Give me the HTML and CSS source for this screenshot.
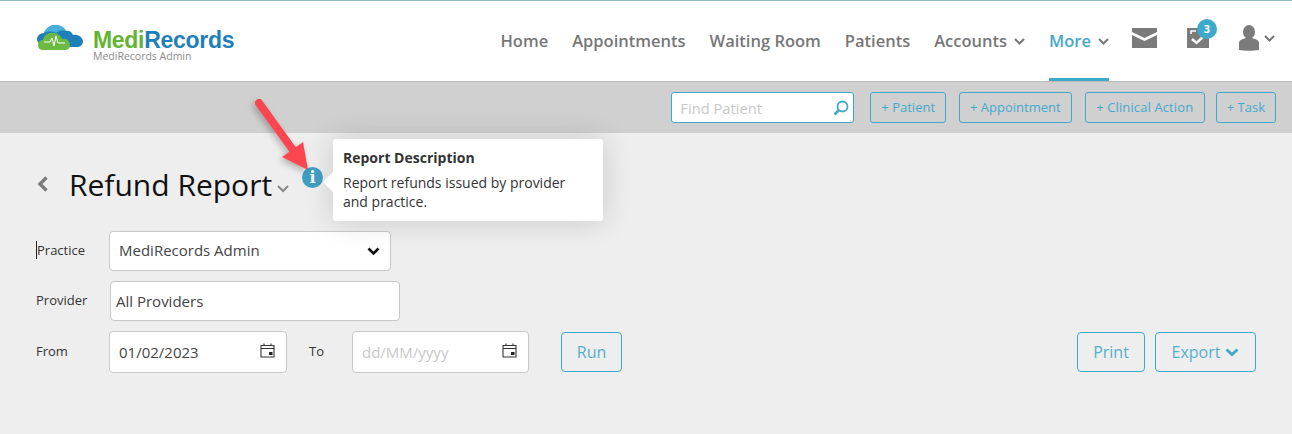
FILE: index.html
```html
<!DOCTYPE html>
<html>
<head>
    <meta charset="UTF-8">
    <title>Refund Report</title>
    <link rel="stylesheet" href="styles.css">
</head>
<body>
    <header class="topbar">
        <div class="brand">
            <svg class="brand-logo" width="48" height="27" viewBox="0 0 48 27">
                <path fill="#1f7fb8" d="M5 20C1 19 0 15 2 12C3 10 6 9 8 9C10 4 14 1 19 1C24 1 28 3 30 7C33 6 36 8 37 11C41 10 46 12 47 17C47 21 44 23 41 23L8 23Z"/>
                <path fill="#48b0d8" d="M8 9C10 4 14 1 19 1C24 1 28 3 30 7C25 6 22 7 20 9C16 7 11 7 8 9Z"/>
                <path fill="#6cb944" d="M7 26C4 26 2 24 2 21C2 18 4 16 7 16C8 11 13 8 18 9C22 9 25 12 26 15C30 14 34 17 34 21C34 24 32 26 29 26Z"/>
                <path fill="none" stroke="#fff" stroke-width="1" d="M8 18H14L16 14L18 22L20 12L22 19H29"/>
            </svg>
            <div class="brand-text">
                <div class="brand-name"><span class="brand-medi">Medi</span><span class="brand-records">Records</span></div>
                <div class="brand-practice">MediRecords Admin</div>
            </div>
        </div>
        <nav class="main-nav">
            <a class="nav-item">Home</a>
            <a class="nav-item">Appointments</a>
            <a class="nav-item">Waiting Room</a>
            <a class="nav-item">Patients</a>
            <a class="nav-item">Accounts
                <svg class="nav-caret" width="11" height="7" viewBox="0 0 11 7"><path d="M1 1L5.5 5.5L10 1" fill="none" stroke="currentColor" stroke-width="2"/></svg>
            </a>
            <a class="nav-item nav-active">More
                <svg class="nav-caret" width="11" height="7" viewBox="0 0 11 7"><path d="M1 1L5.5 5.5L10 1" fill="none" stroke="#777" stroke-width="2"/></svg>
            </a>
        </nav>
        <div class="nav-icons">
            <svg class="icon-mail" width="25" height="20" viewBox="0 0 25 20">
                <path fill="#7b7b7b" d="M0 0H25V4L12.5 10L0 4Z"/>
                <path fill="#7b7b7b" d="M0 7L12.5 13L25 7V20H0Z"/>
            </svg>
            <div class="tasks">
                <svg width="22" height="20" viewBox="0 0 22 20">
                    <path fill="#7b7b7b" d="M0 0H22V20H0Z"/>
                    <path fill="none" stroke="#fff" stroke-width="1.5" d="M4 6V3H9"/>
                    <path fill="none" stroke="#fff" stroke-width="2.4" d="M5 11L9.5 15L17 8"/>
                </svg>
                <span class="badge">3</span>
            </div>
            <div class="user-menu">
                <svg width="20" height="26" viewBox="0 0 20 26">
                    <ellipse cx="10" cy="7" rx="6" ry="7" fill="#7b7b7b"/>
                    <path fill="#7b7b7b" d="M0 25V18C0 15 4 14 7 13H13C16 14 20 15 20 18V25C14 26 6 26 0 25Z"/>
                </svg>
                <svg width="11" height="7" viewBox="0 0 11 7"><path d="M1 1L5.5 5.5L10 1" fill="none" stroke="#777" stroke-width="2"/></svg>
            </div>
        </div>
    </header>

    <div class="toolbar">
        <div class="find-patient">
            <span class="find-text">Find Patient</span>
            <svg width="16" height="16" viewBox="0 0 16 16">
                <circle cx="9.5" cy="6.5" r="5" fill="none" stroke="#3fa9c9" stroke-width="1.8"/>
                <path d="M6 10L1.5 14.5" stroke="#3fa9c9" stroke-width="2.6"/>
            </svg>
        </div>
        <a class="tool-btn tool-first">+ Patient</a>
        <a class="tool-btn">+ Appointment</a>
        <a class="tool-btn tool-clinical">+ Clinical Action</a>
        <a class="tool-btn tool-last">+ Task</a>
    </div>

    <main class="report">
        <div class="title-row">
            <svg class="back" width="12" height="16" viewBox="0 0 12 16"><path d="M9.5 1.5L3 8L9.5 14.5" fill="none" stroke="#7b7b7b" stroke-width="3.4"/></svg>
            <h1>Refund Report</h1>
            <svg class="title-caret" width="12" height="8" viewBox="0 0 12 8"><path d="M1 1L6 6L11 1" fill="none" stroke="#888" stroke-width="2"/></svg>
            <span class="info-icon">i</span>
        </div>

        <form class="report-form">
            <div class="form-row">
                <label class="practice-label">Practice</label>
                <div class="control select-box">
                    <span class="select-value">MediRecords Admin</span>
                    <svg width="13" height="9" viewBox="0 0 13 9"><path d="M1.5 1.5L6.5 6.5L11.5 1.5" fill="none" stroke="#111" stroke-width="2.6"/></svg>
                </div>
            </div>
            <div class="form-row">
                <label>Provider</label>
                <div class="control provider-box">All Providers</div>
            </div>
            <div class="form-row date-row">
                <label>From</label>
                <div class="control date-box">
                    <span>01/02/2023</span>
                    <svg class="cal" width="15" height="15" viewBox="0 0 15 15"><path d="M1 2.5H14V14H1ZM1 5.5H14M4 .5V3M11 .5V3" fill="none" stroke="#333" stroke-width="1.1"/><rect x="9" y="9" width="3.5" height="3" fill="#222"/></svg>
                </div>
                <label class="to-label">To</label>
                <div class="control date-box date-empty">
                    <span>dd/MM/yyyy</span>
                    <svg class="cal" width="15" height="15" viewBox="0 0 15 15"><path d="M1 2.5H14V14H1ZM1 5.5H14M4 .5V3M11 .5V3" fill="none" stroke="#333" stroke-width="1.1"/><rect x="9" y="9" width="3.5" height="3" fill="#222"/></svg>
                </div>
                <a class="btn run-btn">Run</a>
                <a class="btn print-btn">Print</a>
                <a class="btn export-btn">Export
                    <svg width="14" height="9" viewBox="0 0 14 9"><path d="M1.5 1.5L7 6.5L12.5 1.5" fill="none" stroke="#3fa9c9" stroke-width="2.8"/></svg>
                </a>
            </div>
        </form>
    </main>

    <div class="tooltip">
        <h4>Report Description</h4>
        <p>Report refunds issued by provider and practice.</p>
    </div>

    <svg class="callout-arrow" width="70" height="85" viewBox="0 0 70 85">
        <path d="M9 8L43 55" stroke="#fb4650" stroke-width="8" stroke-linecap="round"/>
        <path d="M32 62L53 47L58 75Z" fill="#fb4650"/>
    </svg>
</body>
</html>
```

FILE: styles.css
```css
html, body {
    margin: 0;
    padding: 0;
    height: 434px;
    overflow: hidden;
    background: #eeeeee;
    font-family: 'Open Sans', sans-serif;
    color: #333;
}

.topbar {
    display: flex;
    align-items: stretch;
    height: 80px;
    background: #fff;
    border-top: 1px solid #8fb9bf;
    border-bottom: 1px solid #bbb;
    padding-left: 36px;
}

.brand {
    display: flex;
    align-items: flex-start;
    padding-top: 23px;
}

.brand-logo {
    margin-right: 9px;
}

.brand-text {
    padding-top: 6px;
}

.brand-name {
    font-family: 'Liberation Sans', sans-serif;
    font-weight: bold;
    font-size: 23px;
    line-height: 21px;
    letter-spacing: -0.3px;
}

.brand-medi {
    color: #62b531;
}

.brand-records {
    color: #1f7fb8;
}

.brand-practice {
    font-size: 10.5px;
    line-height: 11px;
    color: #8a8a8a;
}

.main-nav {
    display: flex;
    margin-left: auto;
    gap: 24px;
}

.nav-item {
    display: flex;
    align-items: center;
    gap: 7px;
    box-sizing: border-box;
    height: 80px;
    padding-top: 2px;
    border-bottom: 3px solid transparent;
    font-size: 16.5px;
    font-weight: 600;
    color: #777;
}

.nav-caret {
    margin-top: 2px;
}

.nav-active {
    color: #45a9cc;
    border-bottom-color: #3fa9c9;
}

.nav-icons {
    display: flex;
    align-items: flex-start;
    padding-top: 27px;
    margin-left: 23px;
    padding-right: 17px;
}

.tasks {
    position: relative;
    margin-left: 30px;
    height: 20px;
}

.badge {
    position: absolute;
    top: -9px;
    left: 10px;
    width: 20px;
    height: 20px;
    border-radius: 50%;
    background: #3fa9c9;
    color: #fff;
    font-size: 11px;
    font-weight: 700;
    line-height: 20px;
    text-align: center;
}

.user-menu {
    display: flex;
    align-items: center;
    gap: 5px;
    margin-left: 30px;
    margin-top: -3px;
}

.toolbar {
    display: flex;
    align-items: center;
    justify-content: flex-end;
    height: 51px;
    background: #d0d0d0;
    padding-right: 16px;
    box-sizing: border-box;
}

.find-patient {
    display: flex;
    align-items: center;
    justify-content: space-between;
    box-sizing: border-box;
    width: 183px;
    height: 31px;
    padding: 0 4px 0 8px;
    background: #fff;
    border: 1px solid #3fa9c9;
    border-radius: 3px;
    font-size: 14.7px;
    color: #c8c8c8;
}

.tool-btn {
    box-sizing: border-box;
    height: 31px;
    line-height: 29px;
    padding: 0 10px;
    margin-left: 13px;
    border: 1px solid #3fa9c9;
    border-radius: 3px;
    font-size: 13px;
    color: #45a9cc;
}

.tool-first {
    margin-left: 16px;
}

.tool-clinical {
    padding: 0 10.5px;
    letter-spacing: 0.12px;
}

.tool-last {
    margin-left: 11px;
}

.report {
    padding: 32px 36px 0;
}

.title-row {
    display: flex;
    align-items: center;
    height: 40px;
    margin-bottom: 26px;
}

.back {
    margin: 0 20px 2px 1px;
}

h1 {
    margin: 0 0 2px;
    font-size: 30px;
    font-weight: 400;
    color: #111;
}

.title-caret {
    margin: 8px 0 0 5px;
}

.info-icon {
    width: 21px;
    height: 21px;
    margin: -15px 0 0 13px;
    border-radius: 50%;
    background: #3fa0c4;
    color: #fff;
    font-family: 'DejaVu Serif', serif;
    font-size: 16px;
    font-weight: 700;
    line-height: 21px;
    text-align: center;
}

.report-form {
    display: flex;
    flex-direction: column;
    gap: 10px;
}

.form-row {
    display: flex;
    align-items: center;
    font-size: 13px;
}

.form-row label {
    width: 73px;
    color: #333;
    margin-top: -2px;
}

.practice-label {
    border-left: 1px solid #222;
    box-sizing: border-box;
    line-height: 18px;
}

.control {
    display: flex;
    align-items: center;
    justify-content: space-between;
    box-sizing: border-box;
    height: 40px;
    background: #fff;
    border: 1px solid #c8c8c8;
    border-radius: 4px;
    font-size: 15px;
    color: #444;
}

.select-box {
    width: 282px;
    padding: 0 10px 0 9px;
}

.select-value {
    margin-top: -2px;
}

.provider-box {
    width: 290px;
    margin-left: 1px;
    padding-left: 5px;
}

.date-row {
    height: 42px;
}

.date-box {
    width: 178px;
    height: 42px;
    padding: 0 11px 0 9px;
}

.date-empty {
    width: 177px;
    color: #c8c8c8;
}

.cal {
    margin-top: -4px;
}

.form-row .to-label {
    width: 43px;
    margin-left: 22px;
}

.btn {
    display: flex;
    align-items: center;
    justify-content: center;
    gap: 5px;
    box-sizing: border-box;
    height: 40px;
    border: 1px solid #3fa9c9;
    border-radius: 4px;
    font-size: 16px;
    color: #55aecd;
}

.run-btn {
    width: 61px;
    margin-left: 32px;
}

.print-btn {
    width: 68px;
    margin-left: auto;
}

.export-btn {
    width: 101px;
    margin-left: 10px;
}

/* popup over the page */
.tooltip {
    position: absolute;
    left: 333px;
    top: 139px;
    box-sizing: border-box;
    width: 270px;
    height: 82px;
    padding: 9px 10px;
    background: #fff;
    border-radius: 3px;
    box-shadow: 0 0 30px rgba(0, 0, 0, 0.16);
    font-size: 14px;
    line-height: 19px;
}

.tooltip:before {
    content: '';
    position: absolute;
    left: -10px;
    top: 33px;
    border-top: 10px solid transparent;
    border-bottom: 10px solid transparent;
    border-right: 10px solid #fff;
}

.tooltip h4 {
    margin: 0 0 6px;
    font-size: 14px;
    font-weight: 700;
}

.tooltip p {
    margin: 0;
}

.callout-arrow {
    position: absolute;
    left: 250px;
    top: 95px;
    filter: drop-shadow(-2px 3px 3px rgba(0, 0, 0, 0.25));
}
```
